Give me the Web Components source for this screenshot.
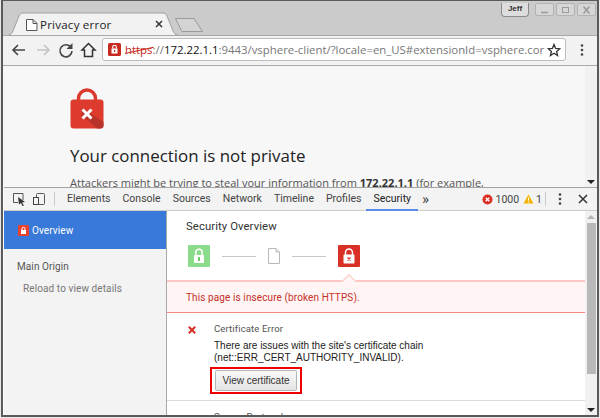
<!DOCTYPE html>
<html>
<head>
<meta charset="utf-8">
<title>Privacy error</title>
<style>
    html, body { margin: 0; padding: 0; background: #e8e8e8; overflow: hidden; }
</style>
</head>
<body>
<browser-window>
    <title-bar></title-bar>
    <nav-bar></nav-bar>
    <error-page></error-page>
    <dev-toolbar></dev-toolbar>
    <security-panel></security-panel>
</browser-window>

<script>
class BrowserWindow extends HTMLElement {
    connectedCallback() {
        this.inner = this.attachShadow({ mode: "open" });
        this.inner.innerHTML = `
            <style>
                :host {
                    display: flex;
                    flex-direction: column;
                    box-sizing: border-box;
                    width: 598px;
                    height: 417px;
                    margin-left: 1px;
                    border: 1px solid #5a5a5a;
                    border-width: 1px 2px 2px 2px;
                    background: #fff;
                    overflow: hidden;
                    font-family: "Open Sans", sans-serif;
                }
            </style>
            <slot></slot>
        `;
    }
}

class TitleBar extends HTMLElement {
    connectedCallback() {
        this.inner = this.attachShadow({ mode: "open" });
        this.inner.innerHTML = `
            <style>
                :host {
                    display: flex;
                    align-items: flex-start;
                    position: relative;
                    flex: none;
                    height: 34px;
                    background: #cbcbcb;
                }
                svg.tabs { position: absolute; left: -2px; top: -1px; }
                .title { position: absolute; left: 37px; top: 15px; font-size: 11.6px; line-height: 18px; color: #222; letter-spacing: .2px; }
                .spacer { flex: 1; }
                .controls { position: relative; display: flex; margin: 2px 1px 0 0; gap: 2px; }
                .user {
                    width: 26px; height: 13px; margin-right: 4px;
                    border: 1px solid #8a8a8a; border-top: 0; border-radius: 0 0 4px 4px;
                    background: #ddd; font: bold 8px "Liberation Sans", sans-serif; line-height: 12px; text-align: center; color: #333;
                }
                .btn { width: 17px; height: 11px; border: 1px solid #b2b2b2; border-radius: 2px; background: #d6d6d6; display: flex; align-items: center; justify-content: center; }
            </style>
            <svg class="tabs" width="210" height="36">
                <path d="M7.5 35 C10 35 11 33 12 31 L18 16 C19 14 20 13 22 13 L162 13 C164 13 165 14 166 16 L172 31 C173 33 174 35 177 35" fill="#f2f2f2" stroke="#a0a0a0"/>
                <path d="M174.5 18.5 L193 18.5 L201.5 31.5 L181 31.5 Z" fill="#d4d4d4" stroke="#9a9a9a" stroke-linejoin="round"/>
                <path d="M25.5 19.5 H32 L36 23.5 V30.5 H25.5 Z M32 19.5 V23.5 H36" fill="#fff" stroke="#555"/>
                <path d="M155 21 L161 27 M161 21 L155 27" stroke="#333" stroke-width="1.5"/>
            </svg>
            <span class="title">Privacy error</span>
            <span class="spacer"></span>
            <div class="controls">
                <div class="user">Jeff</div>
                <div class="btn"><svg width="11" height="8"><path d="M2 6.5H9" stroke="#999" stroke-width="1.5"/></svg></div>
                <div class="btn"><svg width="11" height="8"><rect x="2.5" y="1.5" width="6" height="5" fill="none" stroke="#999"/></svg></div>
                <div class="btn"><svg width="11" height="8"><path d="M2.5 .5L8.5 7.5M8.5 .5L2.5 7.5" stroke="#999" stroke-width="1.5"/></svg></div>
            </div>
        `;
    }
}

class NavBar extends HTMLElement {
    connectedCallback() {
        this.inner = this.attachShadow({ mode: "open" });
        this.inner.innerHTML = `
            <style>
                :host {
                    display: flex;
                    align-items: center;
                    flex: none;
                    box-sizing: border-box;
                    height: 31px;
                    padding: 0 0 2px 6px;
                    background: #f2f2f2;
                    border-top: 1px solid #a8a8a8;
                    border-bottom: 1px solid #a8a8a8;
                }
                svg { display: block; flex: none; }
                .icons { display: flex; gap: 1px; }
                .omni {
                    display: flex;
                    align-items: center;
                    box-sizing: border-box;
                    width: 464px;
                    height: 23px;
                    margin-left: 2px;
                    padding: 0 4px 0 5px;
                    background: #fff;
                    border: 1px solid #bdbdbd;
                    border-radius: 3px;
                }
                .url { flex: 1; margin-left: 4px; font-size: 11.4px; white-space: nowrap; overflow: hidden; color: #777; }
                .url b { font-weight: 400; color: #111; }
                .https { position: relative; color: #c5281c; }
                .https::after { content: ""; position: absolute; left: -1px; right: -1px; top: 8px; height: 1px; background: #c5281c; transform: rotate(-12deg); }
                .dots { margin-left: 14px; }
            </style>
            <div class="icons">
                <svg width="22" height="22"><path d="M16 11H4M9 6L4 11L9 16" fill="none" stroke="#444" stroke-width="1.6"/></svg>
                <svg width="22" height="22"><path d="M5 11H17M12 6L17 11L12 16" fill="none" stroke="#c4c4c4" stroke-width="1.6"/></svg>
                <svg width="22" height="22"><path d="M16 8.5A6 6 0 1 0 17 12" fill="none" stroke="#444" stroke-width="1.6"/><path d="M17.5 4V10H11.5Z" fill="#444"/></svg>
                <svg width="22" height="22"><path d="M10.5 4.5L4 11H6.5V17.5H14.5V11H17L10.5 4.5Z" fill="none" stroke="#333" stroke-width="1.5"/></svg>
            </div>
            <div class="omni">
                <svg width="13" height="13"><rect width="13" height="13" rx="1.5" fill="#c62a20"/><rect x="3.5" y="5.5" width="6" height="5" fill="#fff"/><path d="M4.7 5.5V4a1.8 1.8 0 0 1 3.6 0V5.5" fill="none" stroke="#fff" stroke-width="1.1"/><rect x="6" y="7" width="1.2" height="2" fill="#c62a20"/></svg>
                <div class="url"><span class="https">https</span>://<b>172.22.1.1</b>:9443/vsphere-client/?locale=en_US#extensionId=vsphere.cor</div>
                <svg width="14" height="14"><path d="M7 1.5L8.6 5.4L12.8 5.7L9.6 8.4L10.6 12.5L7 10.3L3.4 12.5L4.4 8.4L1.2 5.7L5.4 5.4Z" fill="none" stroke="#333" stroke-width="1.3"/></svg>
            </div>
            <svg class="dots" width="4" height="14"><circle cx="2" cy="2.5" r="1.3" fill="#444"/><circle cx="2" cy="7" r="1.3" fill="#444"/><circle cx="2" cy="11.5" r="1.3" fill="#444"/></svg>
        `;
    }
}

class ErrorPage extends HTMLElement {
    connectedCallback() {
        this.inner = this.attachShadow({ mode: "open" });
        this.inner.innerHTML = `
            <style>
                :host {
                    display: flex;
                    flex: none;
                    height: 121px;
                    background: #f7f7f7;
                    overflow: hidden;
                }
                main { flex: 1; padding: 22px 0 0 67px; min-width: 0; }
                svg { display: block; }
                h1 { margin: 15px 0 0; font-size: 16.9px; line-height: 24px; font-weight: 400; color: #222; white-space: nowrap; }
                p { margin: 7px 0 0; font-size: 11.03px; line-height: 16px; color: #555; white-space: nowrap; }
                p b { color: #333; }
                .bar { flex: none; display: flex; flex-direction: column; justify-content: flex-end; align-items: center; box-sizing: border-box; width: 12px; padding-bottom: 3px; background: #f1f1f1; }
                .bar i { width: 0; height: 0; border: 4px solid transparent; border-top: 4px solid #222; border-bottom: 0; }
            </style>
            <main>
                <svg width="34" height="41">
                    <path d="M8.5 18V10.500A8.500 8.500 0 0 1 25.500 10.500V18" fill="none" stroke="#d93a2c" stroke-width="3.400"/>
                    <rect x="0.500" y="11.500" width="33" height="29" rx="3" fill="#dd3b2d"/>
                    <path d="M12 20L33.500 34V38A3 3 0 0 1 30.500 40.500H27L12 27Z" fill="#b8342a"/>
                    <path d="M12.500 21.500L21.500 30.500M21.500 21.500L12.500 30.500" stroke="#fff" stroke-width="3"/>
                </svg>
                <h1>Your connection is not private</h1>
                <p>Attackers might be trying to steal your information from <b>172.22.1.1</b> (for example,</p>
            </main>
            <div class="bar"><i></i></div>
        `;
    }
}

class DevToolbar extends HTMLElement {
    connectedCallback() {
        this.inner = this.attachShadow({ mode: "open" });
        this.inner.innerHTML = `
            <style>
                :host {
                    display: flex;
                    align-items: stretch;
                    flex: none;
                    box-sizing: border-box;
                    height: 24px;
                    margin-left: 1px;
                    padding-left: 8px;
                    background: #f3f3f3;
                    border-top: 1px solid #a3a3a3;
                    border-bottom: 1px solid #ccc;
                    font-family: Roboto, sans-serif;
                    font-size: 10.5px;
                    color: #444;
                }
                svg { display: block; flex: none; align-self: center; }
                .sep { flex: none; width: 1px; height: 14px; margin: 0 6px 0 8px; align-self: center; background: #ccc; }
                .tab { display: flex; align-items: center; padding: 0 6px; margin-bottom: -1px; border-bottom: 2px solid transparent; box-sizing: border-box; }
                .tab.on { padding: 0 7px; margin-left: -1px; border-bottom-color: #5a8de8; color: #222; }
                .more { display: flex; align-items: center; margin-left: 4px; font-size: 15px; color: #444; }
                .spacer { flex: 1; }
                .status { display: flex; align-items: center; gap: 2px; }
            </style>
            <svg width="16" height="14" style="margin-right:4px"><path d="M11 8V1.500H1.500V10.500H6" fill="none" stroke="#555"/><path d="M6 5L13 10L10 10.500L12 13.500L10.500 14L9 11L7 12.500Z" fill="#333"/></svg>
            <svg width="14" height="14"><rect x="4.500" y="1.500" width="8" height="11" rx="1" fill="none" stroke="#555"/><rect x="1.500" y="5.500" width="5" height="7" fill="#f3f3f3" stroke="#444"/></svg>
            <span class="sep"></span>
            <span class="tab">Elements</span>
            <span class="tab">Console</span>
            <span class="tab">Sources</span>
            <span class="tab">Network</span>
            <span class="tab">Timeline</span>
            <span class="tab">Profiles</span>
            <span class="tab on">Security</span>
            <span class="more">»</span>
            <span class="spacer"></span>
            <div class="status">
                <svg width="11" height="11"><circle cx="5.500" cy="5.500" r="5" fill="#d93025"/><path d="M3.700 3.700L7.300 7.300M7.300 3.700L3.700 7.300" stroke="#fff" stroke-width="1.300"/></svg>
                <span>1000</span>
                <svg width="11" height="10" style="margin-left:2px"><path d="M5.500 .5L10.500 9.500H.5Z" fill="#f4b400"/><path d="M5.500 3.500V6.500M5.500 7.500V8.500" stroke="#fff"/></svg>
                <span>1</span>
            </div>
            <span class="sep" style="margin:0 12px 0 3px"></span>
            <svg width="4" height="14" style="margin-right:16px"><circle cx="2" cy="2.500" r="1.300" fill="#444"/><circle cx="2" cy="7" r="1.300" fill="#444"/><circle cx="2" cy="11.500" r="1.300" fill="#444"/></svg>
            <svg width="10" height="10" style="margin-right:9px"><path d="M1 1L9 9M9 1L1 9" stroke="#333" stroke-width="1.500"/></svg>
        `;
    }
}

class SecurityPanel extends HTMLElement {
    connectedCallback() {
        this.inner = this.attachShadow({ mode: "open" });
        this.inner.innerHTML = `
            <style>
                :host {
                    display: flex;
                    flex: 1;
                    min-height: 0;
                    margin-left: 1px;
                    background: #fff;
                    font-family: Roboto, sans-serif;
                    font-size: 10px;
                    letter-spacing: .1px;
                    overflow: hidden;
                }
                aside { flex: none; width: 162px; background: #f3f3f3; border-right: 1px solid #a8a8a8; color: #555; }
                .sel { display: flex; align-items: center; gap: 3px; height: 38px; padding-left: 14px; background: #3879d9; color: #fff; }
                .origin { margin: 11px 0 0 13px; line-height: 14px; color: #555; }
                .reload { margin: 8px 0 0 19px; line-height: 14px; color: #777; }
                main { flex: 1; min-width: 0; overflow: hidden; }
                h2 { margin: 9px 0 0 19px; font-size: 11.3px; line-height: 14px; font-weight: 400; color: #333; }
                .flow { display: flex; align-items: center; gap: 12px; margin: 11px 0 0 21px; height: 22px; }
                .flow i { display: block; width: 34px; height: 1px; background: #c8c8c8; }
                svg { display: block; flex: none; }
                .band {
                    position: relative;
                    margin-top: 13px;
                    height: 30px;
                    display: flex;
                    align-items: center;
                    padding-left: 19px;
                    background: #fff5f5;
                    border-top: 2px solid #fdc7c3;
                    border-bottom: 1px solid #f48a84;
                    color: #c62f27;
                }
                .notch {
                    position: absolute; left: 177px; top: -6px;
                    width: 9px; height: 9px;
                    background: #fff5f5;
                    border: solid #fdc7c3; border-width: 1px 0 0 1px;
                    transform: rotate(45deg);
                }
                .row { display: flex; padding: 9px 0 0 21px; height: 78px; border-bottom: 1px solid #dcdcdc; }
                .row svg { margin-top: 4px; }
                .body { margin-left: 18px; }
                .name { line-height: 14px; font-size: 9.6px; color: #555; }
                .desc { margin-top: 4px; font-family: "Liberation Sans", sans-serif; font-size: 10px; letter-spacing: 0; line-height: 12px; color: #222; width: 240px; }
                .mark { display: inline-block; margin: 3px 0 0 -4px; padding: 1px 3px; border: 2px solid #ee0000; }
                button {
                    display: block; margin: 0; padding: 0; width: 82px; height: 21px;
                    font: 10px "Liberation Sans", sans-serif; letter-spacing: 0; color: #333;
                    background: linear-gradient(#f8f8f8, #e4e4e4);
                    border: 1px solid #b5b5b5; border-radius: 2px;
                }
                .next { margin: 9px 0 0 47px; line-height: 14px; font-size: 9.6px; color: #555; }
                .scroll { flex: none; display: flex; flex-direction: column; align-items: center; width: 12px; background: #f1f1f1; }
                .up { width: 0; height: 0; margin-top: 4px; border: 4px solid transparent; border-bottom: 4px solid #b4b4b4; border-top: 0; }
                .thumb { width: 9px; height: 151px; margin-top: 4px; background: #b8b8b8; }
                .down { width: 0; height: 0; margin-top: auto; margin-bottom: 3px; border: 4px solid transparent; border-top: 4px solid #222; border-bottom: 0; }
            </style>
            <aside>
                <div class="sel">
                    <svg width="11" height="11"><rect width="11" height="11" rx="1" fill="#e8412f"/><rect x="3" y="5" width="5" height="4" fill="#fff"/><path d="M4 5V3.800a1.500 1.500 0 0 1 3 0V5" fill="none" stroke="#fff"/></svg>
                    <span>Overview</span>
                </div>
                <div class="origin">Main Origin</div>
                <div class="reload">Reload to view details</div>
            </aside>
            <main>
                <h2>Security Overview</h2>
                <div class="flow">
                    <svg width="22" height="22"><rect width="22" height="22" rx="1" fill="#8adb8a"/><rect x="6" y="10" width="10" height="8" rx="1" fill="#fff"/><path d="M7.800 10V7.500a3.200 3.200 0 0 1 6.400 0V10" fill="none" stroke="#fff" stroke-width="1.500"/><rect x="10" y="12" width="2" height="4" fill="#6cc76c"/></svg>
                    <i></i>
                    <svg width="12" height="16"><path d="M.5 .5H8L11.500 4V15.500H.5Z M8 .5V4H11.500" fill="#fff" stroke="#b8b8b8"/></svg>
                    <i></i>
                    <svg width="22" height="22"><rect width="22" height="22" rx="1" fill="#d93025"/><rect x="5.500" y="9.500" width="11" height="9" rx="1" fill="#fff"/><path d="M7.500 10V7.500a3.500 3.500 0 0 1 7 0V10" fill="none" stroke="#fff" stroke-width="1.500"/><path d="M9.500 12.500L12.500 15.500M12.500 12.500L9.500 15.500" stroke="#d93025" stroke-width="1.200"/></svg>
                </div>
                <div class="band"><span class="notch"></span>This page is insecure (broken HTTPS).</div>
                <div class="row">
                    <svg width="8" height="8"><path d="M.8 .8L7.200 7.200M7.200 .8L.8 7.200" stroke="#d32f22" stroke-width="2"/></svg>
                    <div class="body">
                        <div class="name">Certificate Error</div>
                        <div class="desc">There are issues with the site's certificate chain (net::ERR_CERT_AUTHORITY_INVALID).</div>
                        <div class="mark"><button>View certificate</button></div>
                    </div>
                </div>
                <div class="next">Secure Protocols</div>
            </main>
            <div class="scroll"><span class="up"></span><span class="thumb"></span><span class="down"></span></div>
        `;
    }
}

customElements.define("browser-window", BrowserWindow);
customElements.define("title-bar", TitleBar);
customElements.define("nav-bar", NavBar);
customElements.define("error-page", ErrorPage);
customElements.define("dev-toolbar", DevToolbar);
customElements.define("security-panel", SecurityPanel);
</script>
</body>
</html>
